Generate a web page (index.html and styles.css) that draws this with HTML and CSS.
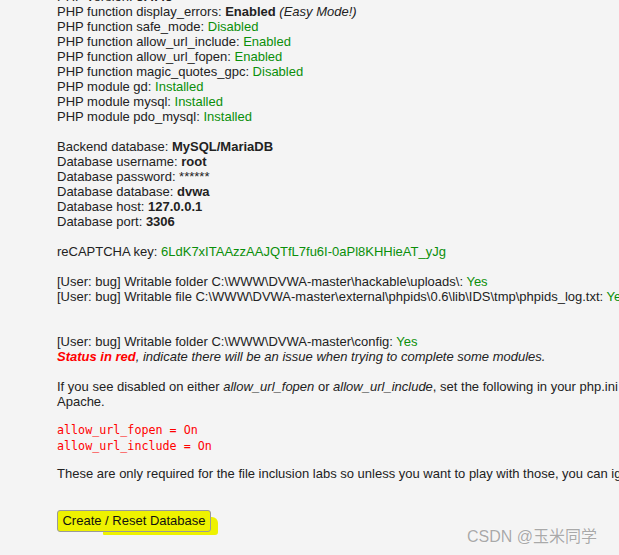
FILE: index.html
```html
<!DOCTYPE html>
<html>

<head>
    <title>Setup DVWA</title>
    <link rel="stylesheet" href="styles.css">
</head>

<body>
    <div class="body_padded">
        <div class="info">
            PHP version: <b>5.4.45</b><br>
            PHP function display_errors: <b>Enabled</b> <i>(Easy Mode!)</i><br>
            PHP function safe_mode: <span class="success">Disabled</span><br>
            PHP function allow_url_include: <span class="success">Enabled</span><br>
            PHP function allow_url_fopen: <span class="success">Enabled</span><br>
            PHP function magic_quotes_gpc: <span class="success">Disabled</span><br>
            PHP module gd: <span class="success">Installed</span><br>
            PHP module mysql: <span class="success">Installed</span><br>
            PHP module pdo_mysql: <span class="success">Installed</span><br>
            <br>
            Backend database: <b>MySQL/MariaDB</b><br>
            Database username: <b>root</b><br>
            Database password: ******<br>
            Database database: <b>dvwa</b><br>
            Database host: <b>127.0.0.1</b><br>
            Database port: <b>3306</b><br>
            <br>
            reCAPTCHA key: <span class="success">6LdK7xITAAzzAAJQTfL7fu6I-0aPl8KHHieAT_yJg</span><br>
            <br>
            [User: bug] Writable folder C:\WWW\DVWA-master\hackable\uploads\: <span class="success">Yes</span><br>
            [User: bug] Writable file C:\WWW\DVWA-master\external\phpids\0.6\lib\IDS\tmp\phpids_log.txt: <span class="success">Yes</span><br>
            <br>
            <br>
            [User: bug] Writable folder C:\WWW\DVWA-master\config: <span class="success">Yes</span><br>
            <i><span class="failure">Status in red</span>, indicate there will be an issue when trying to complete some modules.</i>
        </div>

        <p>
            If you see disabled on either <i>allow_url_fopen</i> or <i>allow_url_include</i>, set the following
            in your php.ini file and restart Apache.
        </p>

        <pre><code>allow_url_fopen = On
allow_url_include = On</code></pre>

        <p>
            These are only required for the file inclusion labs so unless you want to play with those, you can
            ignore them.
        </p>

        <form class="setup">
            <span class="marker">
                <input name="create_db" type="submit" value="Create / Reset Database">
            </span>
        </form>

        <div class="login_box"></div>
    </div>

    <div class="watermark">CSDN @玉米同学</div>
</body>

</html>
```

FILE: styles.css
```css
html {
    overflow: hidden;
}

body {
    margin: 0;
    background: #f4f4f4;
    color: #222;
    font-family: "Liberation Sans", Arial, sans-serif;
    font-size: 13px;
    line-height: 15px;
}

.body_padded {
    width: 680px;
    margin: -11px 0 0 57px;
}

.info {
    white-space: nowrap;
}

.success {
    color: #0a8f0a;
}

.failure {
    color: #f00;
    font-weight: bold;
}

p {
    margin: 15px 0 0;
}

pre {
    margin: 14px 0 0;
    color: #f00;
    font-family: "Liberation Mono", Consolas, monospace;
    font-size: 11.7px;
    line-height: 15px;
}

pre + p {
    margin-top: 11px;
}

.setup {
    margin-top: 29px;
}

.marker {
    position: relative;
    display: inline-block;
    z-index: 0;
}

.marker:after {
    position: absolute;
    content: "";
    left: 30%;
    right: -7px;
    top: 7px;
    bottom: -3px;
    background: #eef200;
    border-radius: 2px 6px 3px 1px;
    z-index: -1;
}

.setup input {
    display: block;
    height: 22px;
    width: 154px;
    margin: 0;
    padding: 0 0 1px;
    border: 1px solid #9a9a9a;
    border-radius: 3px;
    background: #eef200;
    color: #111;
    font-family: "Liberation Sans", Arial, sans-serif;
    font-size: 13px;
}

.login_box {
    margin-top: 23px;
    height: 20px;
    border-top: 2px solid #bfd7f7;
    background: #eef4fc;
}

.watermark {
    position: absolute;
    left: 467px;
    top: 528px;
    color: #a9a9a9;
    font-family: "Liberation Sans", "Noto Sans CJK SC", sans-serif;
    font-size: 16px;
    line-height: 18px;
    text-shadow: 0 0 1px #fff, 0 0 1px #fff;
}
```
